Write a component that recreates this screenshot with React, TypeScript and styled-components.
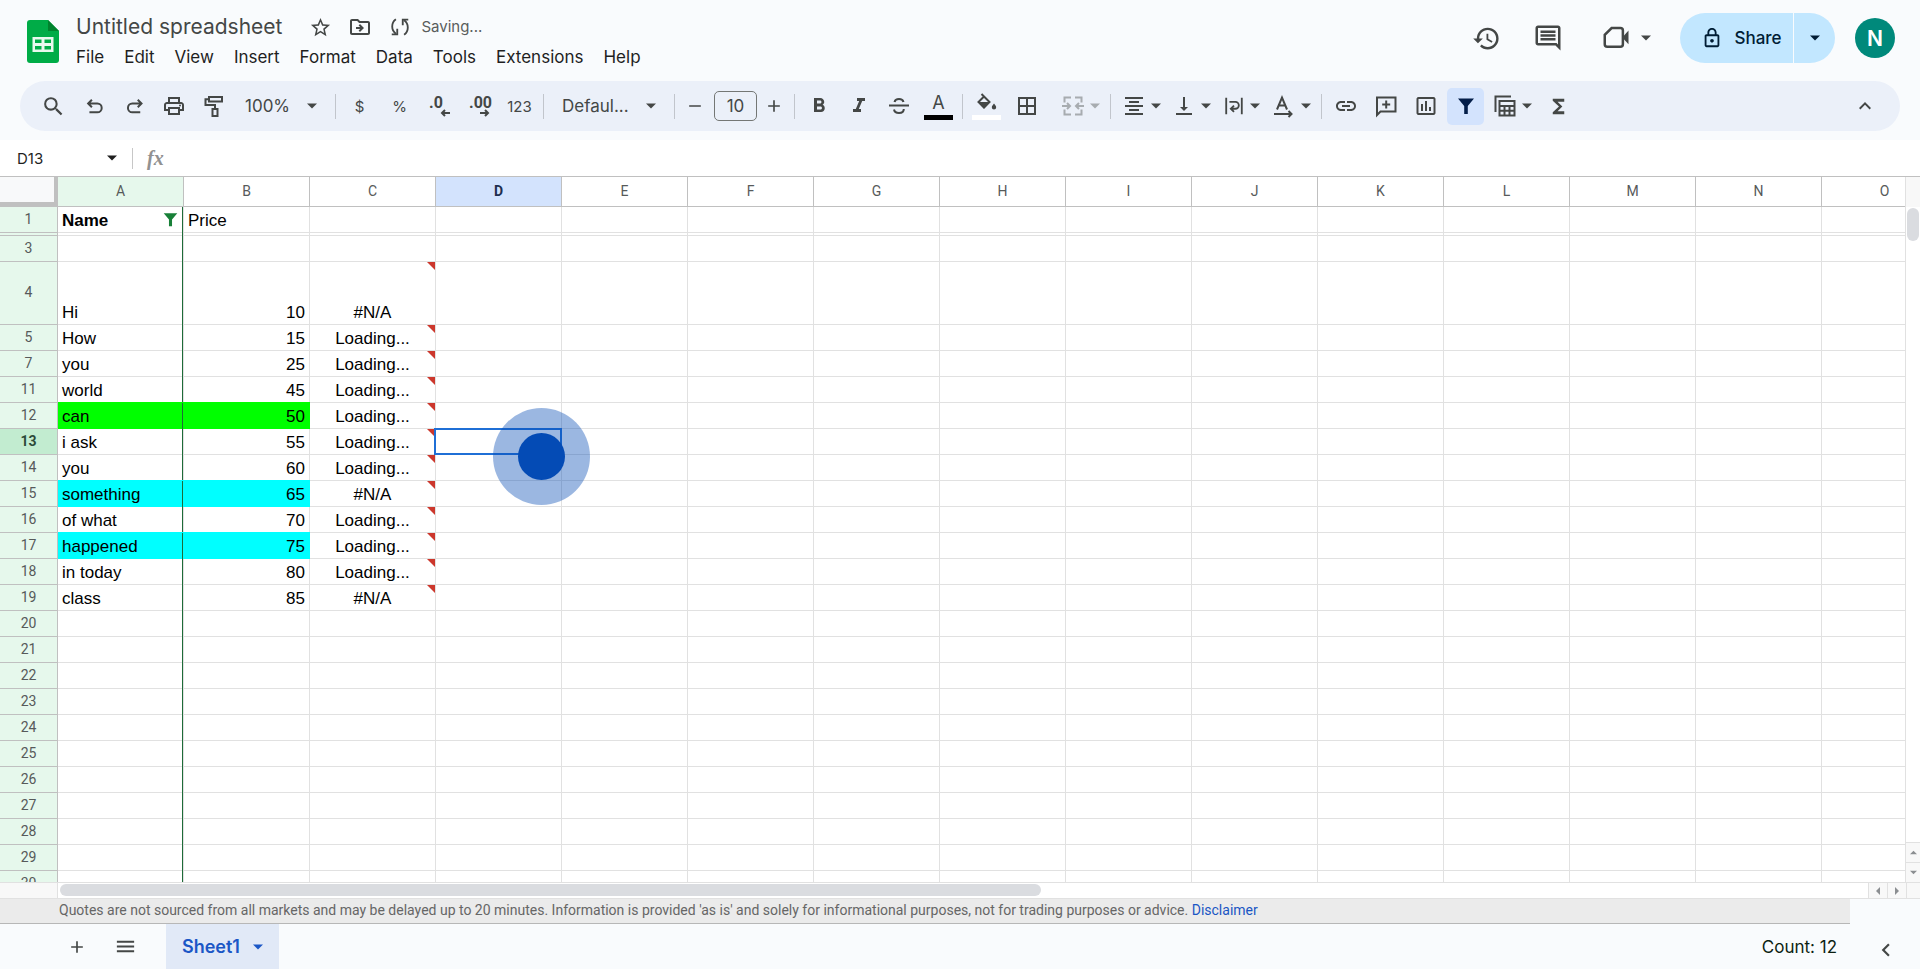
import React from "react";
import styled, { createGlobalStyle, css } from "styled-components";
import {
  MdHistory,
  MdOutlineInsertComment,
  MdStarBorder,
  MdOutlineDriveFileMove,
  MdOutlinePrint,
  MdFormatItalic,
  MdFormatBold,
  MdBorderAll,
  MdFormatAlignCenter,
  MdVerticalAlignBottom,
  MdLink,
  MdInsertChartOutlined,
  MdFunctions,
  MdMenu,
  MdAdd,
  MdRemove,
  MdSearch,
  MdChevronLeft,
  MdExpandLess,
  MdOutlineLock,
} from "react-icons/md";

const ui = `Inter, Roboto, sans-serif`;
const label = `Roboto, "Liberation Sans", sans-serif`;
const sheet = `"Liberation Sans", Arial, sans-serif`;

const GlobalStyle = createGlobalStyle`
  *, *::before, *::after { box-sizing: border-box; }
  body { margin: 0; background: #fff; font-family: ${ui}; color: #1f1f1f; overflow: hidden; }
  button, input, select { font-family: inherit; color: inherit; border: 0; background: transparent; padding: 0; margin: 0; outline: 0; }
  button { display: inline-flex; align-items: center; justify-content: center; cursor: pointer; }
  svg { display: block; flex: none; }
`;

const Page = styled.div`
  display: flex;
  flex-direction: column;
  height: 100vh;
  background: #f9fbfd;
`;

/* ---------- header ---------- */

const Header = styled.header`
  display: flex;
  align-items: flex-start;
  height: 81px;
  padding: 0 25px 0 27px;
`;

const Logo = styled.a`
  display: block;
  margin-top: 20px;
`;

const TitleBlock = styled.div`
  display: flex;
  flex-direction: column;
  margin-left: 17px;
  padding-top: 12px;
`;

const TitleRow = styled.div`
  display: flex;
  align-items: center;
  height: 30px;
  color: #444746;
`;

const Title = styled.h1`
  margin: 0 26px 0 0;
  font-size: 21px;
  font-weight: 400;
  line-height: 30px;
`;

const TitleButton = styled.button`
  width: 24px;
  height: 24px;
  margin-right: 16px;
`;

const Saving = styled.span`
  font-size: 15px;
  line-height: 24px;
  margin-left: -7px;
  color: #5a5d5c;
`;

const MenuBar = styled.nav`
  display: flex;
  gap: 20px;
`;

const MenuItem = styled.button`
  height: 30px;
  font-size: 17px;
  line-height: 30px;
`;

const HeaderActions = styled.div`
  display: flex;
  align-items: center;
  margin-left: auto;
  padding-top: 13px;
  color: #444746;
`;

const HeaderButton = styled.button<{ $w: number }>`
  width: ${(p) => p.$w}px;
  height: 50px;
  gap: 10px;
`;

const ShareGroup = styled.div`
  display: flex;
  height: 50px;
  margin: 0 20px 0 7px;
  border-radius: 25px;
  overflow: hidden;
  color: #001d35;
`;

const ShareButton = styled.button`
  width: 113px;
  gap: 11px;
  padding-left: 10px;
  background: #c2e7ff;
  font-size: 17px;
  font-weight: 500;
`;

const ShareMenu = styled.button`
  width: 41px;
  margin-left: 1px;
  background: #c2e7ff;
`;

const Avatar = styled.button`
  width: 40px;
  height: 40px;
  border-radius: 50%;
  background: #00897b;
  color: #fff;
  font-size: 21px;
  font-weight: 600;
`;

/* ---------- toolbar ---------- */

const Toolbar = styled.div`
  display: flex;
  align-items: center;
  height: 50px;
  margin: 0 20px 9px;
  padding: 0 17px 0 15px;
  border-radius: 25px;
  background: #ebf0f9;
  color: #444746;
  flex: none;
  overflow: hidden;
`;

const Group = styled.div<{ $gap?: number }>`
  display: flex;
  align-items: center;
  gap: ${(p) => p.$gap ?? 3}px;
`;

const Tool = styled.button<{ $active?: boolean }>`
  width: 37px;
  height: 37px;
  flex: none;
  border-radius: 5px;
  font-size: 15px;
  ${(p) => p.$active && css`background: #d3e3fd; color: #041e49;`}
`;

const SplitTool = styled.button<{ $dim?: boolean }>`
  width: ${(p) => (p.$dim ? 57 : 50)}px;
  padding-left: ${(p) => (p.$dim ? 7 : 0)}px;
  height: 37px;
  flex: none;
  gap: 5px;
  opacity: ${(p) => (p.$dim ? 0.4 : 1)};
`;

const StepTool = styled.button`
  width: 30px;
  height: 30px;
`;

const Divider = styled.span`
  width: 1px;
  height: 25px;
  flex: none;
  margin: 0 5px;
  background: #c1c5cc;
`;

const Picker = styled.label<{ $w: number }>`
  display: flex;
  align-items: center;
  width: ${(p) => p.$w}px;
  padding: 0 13px;
  select {
    appearance: none;
    flex: 1;
    min-width: 0;
    height: 37px;
    font-size: 17px;
  }
`;

const SizeInput = styled.input`
  width: 43px;
  height: 30px;
  margin: 0 2px 0 4px;
  border: 1px solid #747775;
  border-radius: 5px;
  font-size: 17px;
  text-align: center;
`;

const Swatched = styled.span<{ $color: string }>`
  display: flex;
  flex-direction: column;
  align-items: center;
  border-bottom: 5px solid ${(p) => p.$color};
  width: 29px;
  height: 27px;
  font-size: 18px;
  line-height: 20px;
`;

const PushRight = styled.div`
  margin-left: auto;
`;

/* ---------- formula bar ---------- */

const FormulaBar = styled.div`
  display: flex;
  align-items: center;
  height: 37px;
  flex: none;
  background: #fff;
  border-bottom: 1px solid #c0c0c0;
`;

const NameBox = styled.input`
  width: 90px;
  margin-left: 17px;
  font-size: 15px;
`;

const NameMenu = styled.button`
  width: 10px;
  height: 24px;
  margin-right: 15px;
`;

const FormulaRule = styled.span`
  width: 1px;
  height: 21px;
  margin-right: 14px;
  background: #c7c7c7;
`;

const Fx = styled.span`
  font-family: "Liberation Serif", serif;
  font-style: italic;
  font-weight: 700;
  font-size: 20px;
  line-height: 24px;
  color: #919191;
`;

const FormulaInput = styled.input`
  flex: 1;
  margin-left: 12px;
  font-size: 16px;
`;

/* ---------- grid ---------- */

const Workspace = styled.main`
  display: flex;
  flex: 1;
  min-height: 0;
  background: #fff;
`;

const GridView = styled.div`
  position: relative;
  flex: 1;
  min-width: 0;
  overflow: hidden;
`;

const Table = styled.table`
  width: 1948px;
  table-layout: fixed;
  border-collapse: separate;
  border-spacing: 0;
  font-family: ${sheet};
  font-size: 17px;
  color: #000;
`;

const Corner = styled.td`
  width: 58px;
  height: 30px;
  padding: 0;
  background: #f8f9fa;
  border: solid #c0c0c0;
  border-width: 0 4px 5px 0;
`;

const ColHead = styled.th<{ $tone?: "filter" | "active" }>`
  width: 126px;
  height: 30px;
  padding: 0 0 1px;
  font: 400 14px/16px ${label};
  color: #575a5a;
  border: solid #c0c0c0;
  border-width: 0 1px 1px 0;
  ${(p) => p.$tone === "filter" && css`background: #e6f8ec;`}
  ${(p) => p.$tone === "active" && css`background: #d3e3fd; color: #1f2f4f; font-weight: 700;`}
`;

const RowHead = styled.th<{ $active?: boolean; $h: number }>`
  height: ${(p) => p.$h}px;
  padding: 0 0 2px;
  font: ${(p) => (p.$active ? 700 : 400)} 14px/16px ${label};
  color: ${(p) => (p.$active ? "#2c4a38" : "#575a5a")};
  background: ${(p) => (p.$active ? "#c2ecd0" : "#e6f8ec")};
  border: solid #c0c0c0;
  border-width: 0 1px 1px 0;
`;

const filterEdge = css`
  &::after {
    content: "";
    position: absolute;
    top: 0;
    right: 0;
    bottom: -1px;
    width: 1px;
    background: #1e6b38;
  }
`;

const Cell = styled.td<{
  $align?: string;
  $bold?: boolean;
  $fill?: string;
  $edge?: boolean;
}>`
  position: relative;
  padding: 0 4px;
  line-height: 22px;
  vertical-align: bottom;
  white-space: nowrap;
  text-align: ${(p) => p.$align ?? "left"};
  font-weight: ${(p) => (p.$bold ? 700 : 400)};
  background: ${(p) => p.$fill ?? "transparent"};
  border: solid ${(p) => p.$fill ?? "#e1e1e1"};
  border-width: 0 1px 1px 0;
  box-shadow: ${(p) => (p.$fill ? `0 -1px ${p.$fill}` : "none")};
  ${(p) => p.$edge && filterEdge}
`;

const HiddenRowCell = styled.td<{ $head?: boolean; $edge?: boolean }>`
  position: relative;
  height: 3px;
  padding: 0;
  line-height: 0;
  border: solid ${(p) => (p.$head ? "#c0c0c0" : "#e1e1e1")};
  border-width: 0 1px 1px 0;
  background: ${(p) => (p.$head ? "#e6f8ec" : "#fff")};
  ${(p) => p.$edge && filterEdge}
`;

const NoteMark = styled.span`
  position: absolute;
  top: 0;
  right: 0;
  border-top: 8px solid #cc372c;
  border-left: 8px solid transparent;
`;

const Selection = styled.span`
  position: absolute;
  inset: -1px -1px -1px -2px;
  border: 2px solid #1f6fd6;
  z-index: 1;
`;

const FilterButton = styled.button`
  position: absolute;
  right: 4px;
  bottom: 4px;
  color: #188038;
`;

const ClickMark = styled.div`
  position: absolute;
  z-index: 2;
  left: 493px;
  top: 231px;
  display: grid;
  place-items: center;
  width: 97px;
  height: 97px;
  border-radius: 50%;
  background: rgba(4, 75, 181, 0.4);
  &::after {
    content: "";
    width: 47px;
    height: 47px;
    border-radius: 50%;
    background: #044bb5;
  }
`;

/* ---------- scroll bars ---------- */

const VScroll = styled.div`
  display: flex;
  flex-direction: column;
  align-items: stretch;
  width: 15px;
  border-left: 1px solid #e1e1e1;
`;

const VScrollHead = styled.div`
  height: 30px;
  background: #f8f8f8;
`;

const VThumb = styled.div`
  width: 12px;
  height: 33px;
  margin: 1px 1px auto;
  border-radius: 6px;
  background: #dadce0;
`;

const VArrow = styled.button`
  height: 20px;
  background: #f8f8f8;
  border-top: 1px solid #e1e1e1;
  color: #8b8e91;
`;

const HScroll = styled.div`
  display: flex;
  height: 17px;
  flex: none;
  background: #fff;
  border: solid #e1e1e1;
  border-width: 1px 0;
`;

const HScrollHead = styled.div`
  width: 58px;
  background: #f8f8f8;
  border-right: 1px solid #e1e1e1;
`;

const HTrack = styled.div`
  flex: 1;
  padding: 1px 2px;
`;

const HThumb = styled.div`
  width: 54.3%;
  height: 12px;
  border-radius: 6px;
  background: #dadce0;
`;

const HArrow = styled.button`
  width: 19px;
  background: #f8f8f8;
  border-left: 1px solid #e1e1e1;
  color: #8b8e91;
`;

const HCorner = styled.div`
  width: 14px;
  background: #f8f8f8;
  border-left: 1px solid #e1e1e1;
`;

/* ---------- footer ---------- */

const Disclaimer = styled.p`
  margin: 0 70px 0 0;
  height: 25px;
  flex: none;
  padding-left: 59px;
  background: #ebebeb;
  border-bottom: 1px solid #b7b7b7;
  font: 400 14px/23px ${label};
  color: #666;
  white-space: nowrap;
  overflow: hidden;
  a {
    color: #1a56c4;
    text-decoration: none;
  }
`;

const Footer = styled.footer`
  display: flex;
  align-items: center;
  height: 46px;
  flex: none;
  border-bottom: 1px solid #fff;
  padding: 0 10px 0 52px;
  color: #444746;
`;

const FooterButton = styled.button`
  width: 49px;
  height: 45px;
`;

const PanelButton = styled(FooterButton)`
  padding-top: 6px;
`;

const SheetTab = styled.button`
  width: 113px;
  height: 45px;
  margin-left: 16px;
  gap: 13px;
  background: #e1e9f7;
  color: #1b57c6;
  font-size: 18px;
  font-weight: 600;
`;

const Count = styled.button`
  margin-left: auto;
  margin-right: 24px;
  color: #0d1f12;
  font-size: 17px;
`;

/* ---------- icons ---------- */

const Caret = ({ dir = "down", size = 10 }: { dir?: "down" | "up" | "left" | "right"; size?: number }) => {
  const d = { down: "M0 2.5h10l-5 5z", up: "M0 7.5h10l-5-5z", left: "M7.5 0v10l-5-5z", right: "M2.5 0v10l5-5z" }[dir];
  return (
    <svg width={size} height={size} viewBox="0 0 10 10" fill="currentColor" aria-hidden="true">
      <path d={d} />
    </svg>
  );
};

const Stroke = ({ size = 24, w = 2, children }: { size?: number; w?: number; children: React.ReactNode }) => (
  <svg width={size} height={size} viewBox="0 0 24 24" fill="none" stroke="currentColor" strokeWidth={w} aria-hidden="true">
    {children}
  </svg>
);

const SheetsLogo = () => (
  <svg width="32" height="43" viewBox="0 0 32 43" aria-hidden="true">
    <path d="M3 0h18l11 11v29a3 3 0 0 1-3 3H3a3 3 0 0 1-3-3V3a3 3 0 0 1 3-3z" fill="#00ac47" />
    <path d="M21 0l11 11H21z" fill="#00832d" />
    <path d="M5.500 17h21v15h-21zM8 19.500v3.500h6.500v-3.500zm9.500 0v3.500H24v-3.500zM8 26v3.500h6.500V26zm9.500 0v3.500H24V26z" fill="#e9f9ee" fillRule="evenodd" />
  </svg>
);

const SyncIcon = () => (
  <Stroke size={22}>
    <path d="M7.500 3.500C5 5.300 3.500 8.300 3.500 11.500c0 3.200 1.500 6 4 7.800M16.500 20.500c2.500-1.800 4-4.800 4-8 0-3.200-1.500-6-4-7.800" />
    <path d="M3 20h6v-6M21 4h-6v6" />
  </Stroke>
);

const VideoIcon = () => (
  <Stroke size={30}>
    <path d="M8.500 4H15.500a2 2 0 0 1 2 2v11a2 2 0 0 1-2 2H5a2 2 0 0 1-2-2V9.500z" />
    <path d="M17 11.500l5-5.500v11z" fill="currentColor" stroke="none" />
  </Stroke>
);

const UndoIcon = () => (
  <Stroke size={20} w={2.4}>
    <path d="M9.500 4.500L5 9l4.500 4.500M5.500 9H16a5 5 0 0 1 0 10.500H6.500" />
  </Stroke>
);

const RedoIcon = () => (
  <Stroke size={20} w={2.4}>
    <path d="M16.500 4.500L21 9l-4.500 4.500M20.500 9H10a5 5 0 0 0 0 10.500h9.500" />
  </Stroke>
);

const PaintRollerIcon = () => (
  <Stroke size={24}>
    <path d="M7 3h13v4.500H7zM7 5.200H3.500v5.800H13v4M10.500 15h5v7h-5z" />
  </Stroke>
);

const StrikeIcon = () => (
  <Stroke size={24}>
    <path d="M2 11.500h20M7.500 8c.5-2 2.200-3 4.500-3s4 1 4.500 3M7 15.500c.5 2.500 2.500 3.500 5 3.500s4.800-1.200 4.800-4" />
  </Stroke>
);

const BucketIcon = () => (
  <svg width="22" height="22" viewBox="0 0 22 22" aria-hidden="true">
    <path d="M5.500 1l8 8-5.500 5.500L2.500 9 8 3.500" fill="none" stroke="currentColor" strokeWidth="2" />
    <path d="M2 9h12l-6 6.500z" fill="currentColor" />
    <path d="M18 10.500c1.500 1.800 2.200 2.800 2.200 3.800a2.200 2.200 0 0 1-4.400 0c0-1 .7-2 2.200-3.800z" fill="currentColor" />
  </svg>
);

const DecimalBox = styled.span`
  display: flex;
  flex-direction: column;
  align-items: flex-start;
  width: 21px;
  font: 700 16px/13px ${label};
  svg {
    align-self: flex-end;
  }
`;

const DecimalIcon = ({ text, dir }: { text: string; dir: "left" | "right" }) => (
  <DecimalBox>
    {text}
    <svg width="10" height="8" viewBox="0 0 10 8" fill="none" stroke="currentColor" strokeWidth="2" aria-hidden="true">
      <path d={dir === "left" ? "M10 4H2M5 1L2 4l3 3" : "M0 4h8M5 1l3 3-3 3"} />
    </svg>
  </DecimalBox>
);

const MergeIcon = () => (
  <Stroke size={24}>
    <path d="M10 3.500H3.500V8.500M3.500 15.500v5H10M14 3.500h6.500v5M20.500 15.500v5H14M1 12h8M6 9l3 3-3 3M23 12h-8M18 9l-3 3 3 3" />
  </Stroke>
);

const WrapIcon = () => (
  <Stroke size={22}>
    <path d="M3.500 3v18M20.500 3v18M7 7.500h6.500a3.700 3.700 0 0 1 0 7.500H9M12 11.500L8.500 15l3.500 3.500" />
  </Stroke>
);

const RotateIcon = () => (
  <Stroke size={24}>
    <path d="M5 15.500L10 3.500l5 12M6.500 11.500h7M2 20h17M16.500 17l3 3-3 3" />
  </Stroke>
);

const AddCommentIcon = () => (
  <Stroke size={24}>
    <path d="M3 21V3.500h18.500v14H6.500zM12.200 6.500v8M8.200 10.500h8" />
  </Stroke>
);

const FilterIcon = ({ size = 20 }: { size?: number }) => (
  <svg width={size} height={size} viewBox="0 0 20 20" fill="currentColor" aria-hidden="true">
    <path d="M2 2.500h16l-6.200 7.500v8H8.200v-8z" />
  </svg>
);

const TableViewIcon = () => (
  <Stroke size={24}>
    <path d="M2.500 18V2.500H18M6.500 7h15v14.500h-15zM6.500 12h15M6.500 16.700h15M11.500 12v9.500M16.500 12v9.500" />
  </Stroke>
);

/* ---------- data ---------- */

const columns = "ABCDEFGHIJKLMNO".split("");
const menus = ["File", "Edit", "View", "Insert", "Format", "Data", "Tools", "Extensions", "Help"];

type Row = { n: number; h?: number; name?: string; price?: string; quote?: string; fill?: string };

const rows: Row[] = [
  { n: 3 },
  { n: 4, h: 63, name: "Hi", price: "10", quote: "#N/A" },
  { n: 5, name: "How", price: "15", quote: "Loading..." },
  { n: 7, name: "you", price: "25", quote: "Loading..." },
  { n: 11, name: "world", price: "45", quote: "Loading..." },
  { n: 12, name: "can", price: "50", quote: "Loading...", fill: "#00ff00" },
  { n: 13, name: "i ask", price: "55", quote: "Loading..." },
  { n: 14, name: "you", price: "60", quote: "Loading..." },
  { n: 15, name: "something", price: "65", quote: "#N/A", fill: "#00ffff" },
  { n: 16, name: "of what", price: "70", quote: "Loading..." },
  { n: 17, name: "happened", price: "75", quote: "Loading...", fill: "#00ffff" },
  { n: 18, name: "in today", price: "80", quote: "Loading..." },
  { n: 19, name: "class", price: "85", quote: "#N/A" },
  ...Array.from({ length: 11 }, (_, i) => ({ n: 20 + i })),
];

const SheetRow = ({ row }: { row: Row }) => (
  <tr>
    <RowHead scope="row" $h={row.h ?? 26} $active={row.n === 13}>
      {row.n}
    </RowHead>
    <Cell $edge $fill={row.fill}>{row.name}</Cell>
    <Cell $align="right" $fill={row.fill}>{row.price}</Cell>
    <Cell $align="center">
      {row.quote}
      {row.quote && <NoteMark />}
    </Cell>
    {columns.slice(3).map((c) => (
      <Cell key={c}>{row.n === 13 && c === "D" && <Selection />}</Cell>
    ))}
  </tr>
);

export default function App() {
  return (
    <Page>
      <GlobalStyle />
      <Header>
        <Logo href="#" aria-label="Sheets home">
          <SheetsLogo />
        </Logo>
        <TitleBlock>
          <TitleRow>
            <Title>Untitled spreadsheet</Title>
            <TitleButton aria-label="Star"><MdStarBorder size={23} /></TitleButton>
            <TitleButton aria-label="Move"><MdOutlineDriveFileMove size={24} /></TitleButton>
            <TitleButton aria-label="Document status"><SyncIcon /></TitleButton>
            <Saving>Saving...</Saving>
          </TitleRow>
          <MenuBar>
            {menus.map((m) => (
              <MenuItem key={m}>{m}</MenuItem>
            ))}
          </MenuBar>
        </TitleBlock>
        <HeaderActions>
          <HeaderButton $w={62} aria-label="Version history"><MdHistory size={29} /></HeaderButton>
          <HeaderButton $w={62} aria-label="Comments"><MdOutlineInsertComment size={30} /></HeaderButton>
          <HeaderButton $w={94} aria-label="Join a call"><VideoIcon /><Caret /></HeaderButton>
          <ShareGroup>
            <ShareButton><MdOutlineLock size={22} />Share</ShareButton>
            <ShareMenu aria-label="Share options"><Caret /></ShareMenu>
          </ShareGroup>
          <Avatar aria-label="Account">N</Avatar>
        </HeaderActions>
      </Header>

      <Toolbar role="toolbar">
        <Group>
          <Tool aria-label="Search"><MdSearch size={25} /></Tool>
          <Tool aria-label="Undo"><UndoIcon /></Tool>
          <Tool aria-label="Redo"><RedoIcon /></Tool>
          <Tool aria-label="Print"><MdOutlinePrint size={24} /></Tool>
          <Tool aria-label="Paint format"><PaintRollerIcon /></Tool>
        </Group>
        <Picker $w={98}>
          <select aria-label="Zoom"><option>100%</option></select>
          <Caret />
        </Picker>
        <Divider />
        <Group>
          <Tool aria-label="Currency">$</Tool>
          <Tool aria-label="Percent">%</Tool>
          <Tool aria-label="Decrease decimals"><DecimalIcon text=".0" dir="left" /></Tool>
          <Tool aria-label="Increase decimals"><DecimalIcon text=".00" dir="right" /></Tool>
          <Tool aria-label="More formats">123</Tool>
        </Group>
        <Divider />
        <Picker $w={120}>
          <select aria-label="Font"><option>Defaul...</option></select>
          <Caret />
        </Picker>
        <Divider />
        <StepTool aria-label="Decrease font size"><MdRemove size={20} /></StepTool>
        <SizeInput aria-label="Font size" defaultValue="10" />
        <StepTool aria-label="Increase font size"><MdAdd size={20} /></StepTool>
        <Divider />
        <Group>
          <Tool aria-label="Bold"><MdFormatBold size={24} /></Tool>
          <Tool aria-label="Italic"><MdFormatItalic size={24} /></Tool>
          <Tool aria-label="Strikethrough"><StrikeIcon /></Tool>
          <Tool aria-label="Text color"><Swatched $color="#000">A</Swatched></Tool>
        </Group>
        <Divider />
        <Group>
          <Tool aria-label="Fill color"><Swatched $color="#fff"><BucketIcon /></Swatched></Tool>
          <Tool aria-label="Borders"><MdBorderAll size={24} /></Tool>
          <SplitTool $dim aria-label="Merge cells"><MergeIcon /><Caret /></SplitTool>
        </Group>
        <Divider />
        <Group $gap={0}>
          <SplitTool aria-label="Horizontal align"><MdFormatAlignCenter size={24} /><Caret /></SplitTool>
          <SplitTool aria-label="Vertical align"><MdVerticalAlignBottom size={24} /><Caret /></SplitTool>
          <SplitTool aria-label="Text wrapping"><WrapIcon /><Caret /></SplitTool>
          <SplitTool aria-label="Text rotation"><RotateIcon /><Caret /></SplitTool>
        </Group>
        <Divider />
        <Group>
          <Tool aria-label="Insert link"><MdLink size={24} /></Tool>
          <Tool aria-label="Insert comment"><AddCommentIcon /></Tool>
          <Tool aria-label="Insert chart"><MdInsertChartOutlined size={24} /></Tool>
          <Tool $active aria-label="Remove filter"><FilterIcon /></Tool>
          <SplitTool aria-label="Table views"><TableViewIcon /><Caret /></SplitTool>
          <Tool aria-label="Functions"><MdFunctions size={23} /></Tool>
        </Group>
        <PushRight>
          <Tool aria-label="Hide the menus"><MdExpandLess size={24} /></Tool>
        </PushRight>
      </Toolbar>

      <FormulaBar>
        <NameBox aria-label="Name box" defaultValue="D13" />
        <NameMenu aria-label="Named ranges"><Caret /></NameMenu>
        <FormulaRule />
        <Fx>fx</Fx>
        <FormulaInput aria-label="Formula" />
      </FormulaBar>

      <Workspace>
        <GridView>
          <Table>
            <thead>
              <tr>
                <Corner />
                {columns.map((c) => (
                  <ColHead key={c} scope="col" $tone={c === "A" ? "filter" : c === "D" ? "active" : undefined}>
                    {c}
                  </ColHead>
                ))}
              </tr>
            </thead>
            <tbody>
              <tr>
                <RowHead scope="row" $h={26}>1</RowHead>
                <Cell $bold $edge>
                  Name
                  <FilterButton aria-label="Filter Name"><FilterIcon size={17} /></FilterButton>
                </Cell>
                <Cell>Price</Cell>
                {columns.slice(2).map((c) => (
                  <Cell key={c} />
                ))}
              </tr>
              <tr>
                <HiddenRowCell $head />
                {columns.map((c) => (
                  <HiddenRowCell key={c} $edge={c === "A"} />
                ))}
              </tr>
              {rows.map((r) => (
                <SheetRow key={r.n} row={r} />
              ))}
            </tbody>
          </Table>
          <ClickMark />
        </GridView>
        <VScroll>
          <VScrollHead />
          <VThumb />
          <VArrow aria-label="Scroll up"><Caret dir="up" size={7} /></VArrow>
          <VArrow aria-label="Scroll down"><Caret dir="down" size={7} /></VArrow>
        </VScroll>
      </Workspace>

      <HScroll>
        <HScrollHead />
        <HTrack><HThumb /></HTrack>
        <HArrow aria-label="Scroll left"><Caret dir="left" size={8} /></HArrow>
        <HArrow aria-label="Scroll right"><Caret dir="right" size={8} /></HArrow>
        <HCorner />
      </HScroll>

      <Disclaimer>
        Quotes are not sourced from all markets and may be delayed up to 20 minutes. Information is provided 'as is' and
        solely for informational purposes, not for trading purposes or advice. <a href="#">Disclaimer</a>
      </Disclaimer>

      <Footer>
        <FooterButton aria-label="Add sheet"><MdAdd size={20} /></FooterButton>
        <FooterButton aria-label="All sheets"><MdMenu size={23} /></FooterButton>
        <SheetTab>Sheet1<Caret /></SheetTab>
        <Count>Count: 12</Count>
        <PanelButton aria-label="Show side panel"><MdChevronLeft size={26} /></PanelButton>
      </Footer>
    </Page>
  );
}
